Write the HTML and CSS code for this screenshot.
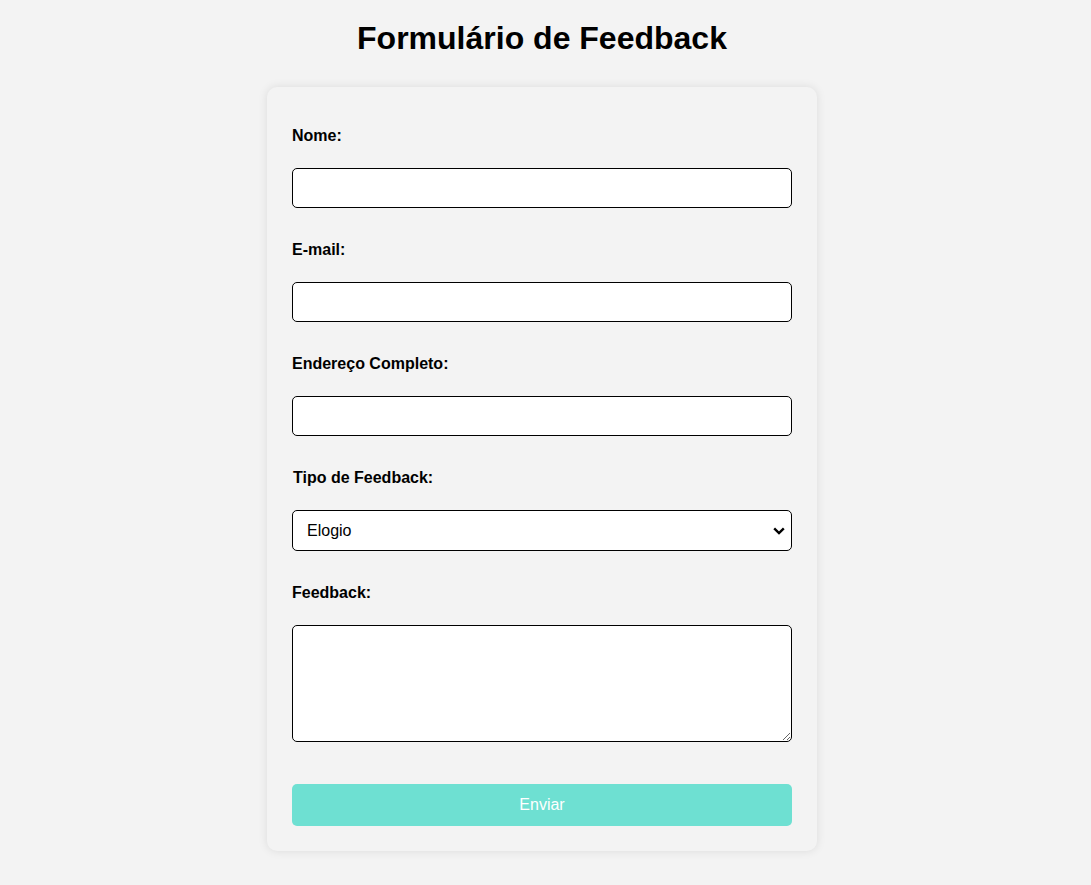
FILE: index.html
```html
<!DOCTYPE html>
<html lang="pt-BR">
<head>
<meta charset="utf-8">
<title>Formulário de Feedback</title>
<link rel="stylesheet" href="styles.css">
</head>
<body>
<h1 class="title">Formulário de Feedback</h1>
<form class="card">
  <label class="label" for="nome">Nome:</label>
  <input class="field" type="text" id="nome">
  <label class="label" for="email">E-mail:</label>
  <input class="field" type="email" id="email">
  <label class="label" for="endereco">Endereço Completo:</label>
  <input class="field" type="text" id="endereco">
  <label class="label label-tipo" for="tipo">Tipo de Feedback:</label>
  <select class="field select" id="tipo">
    <option>Elogio</option>
    <option>Sugestão</option>
    <option>Reclamação</option>
  </select>
  <label class="label" for="feedback">Feedback:</label>
  <textarea class="field textarea" id="feedback"></textarea>
  <button class="submit" type="button">Enviar</button>
</form>
</body>
</html>
```
FILE: styles.css
```css
html, body {
  margin: 0;
  padding: 0;
  background: #f3f3f3;
  font-family: "Liberation Sans", Arial, sans-serif;
  color: #000;
}

body {
  padding-right: 7px;
}

.title {
  font-size: 32px;
  line-height: 37px;
  font-weight: bold;
  text-align: center;
  margin: 20px 0 30px;
}

.card {
  box-sizing: border-box;
  width: 550px;
  margin: 0 auto 34px;
  padding: 25px;
  background: #f3f3f3;
  border-radius: 10px;
  box-shadow: 0 0 10px rgba(0, 0, 0, 0.1);
  display: flex;
  flex-direction: column;
}

.label {
  display: block;
  font-size: 16px;
  line-height: 18px;
  font-weight: bold;
  padding-top: 1px;
  margin: 14px 0 23px;
}

.label + .field {
  margin-bottom: 18px;
}

.label-tipo {
  padding-left: 1px;
}

.field {
  box-sizing: border-box;
  width: 500px;
  height: 40px;
  border: 1px solid #000;
  border-radius: 5px;
  background-color: #fff;
  font-family: "Liberation Sans", Arial, sans-serif;
  font-size: 16px;
  padding: 0 10px;
  margin: 0;
}

.select {
  -webkit-appearance: none;
  appearance: none;
  padding-left: 14px;
  color: #000;
  height: 41px;
  background-image: url("data:image/svg+xml,%3Csvg xmlns='http://www.w3.org/2000/svg' width='12' height='8' viewBox='0 0 12 8'%3E%3Cpath d='M1.2 1.3 L6 6 L10.8 1.3' fill='none' stroke='%23000' stroke-width='2.4'/%3E%3C/svg%3E");
  background-repeat: no-repeat;
  background-position: right 6px center;
  background-size: 12px 8px;
}

.textarea {
  height: 117px;
  resize: vertical;
  margin-bottom: 42px !important;
}

.submit {
  box-sizing: border-box;
  width: 500px;
  height: 42px;
  border: none;
  border-radius: 5px;
  background: #6ee0d2;
  color: #fff;
  font-family: "Liberation Sans", Arial, sans-serif;
  font-size: 16px;
  cursor: pointer;
}
```
